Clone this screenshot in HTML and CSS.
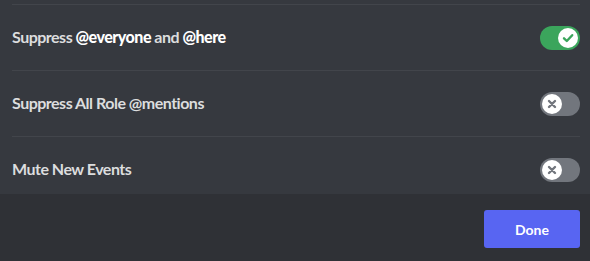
FILE: index.html
```html
<!DOCTYPE html>
<html>
<head>
<meta charset="utf-8">
<link rel="stylesheet" href="styles.css">
</head>
<body>
<div class="modal">
  <div class="scroller">
    <div class="row">
      <div class="label">Suppress <strong>@everyone</strong> and <strong>@here</strong></div>
      <div class="toggle on">
        <div class="knob">
          <svg viewBox="0 0 20 20" width="20" height="20"><path d="M6 10.3 L8.8 13 L14.2 7.2" fill="none" stroke="#3ba55c" stroke-width="2.4" stroke-linecap="round" stroke-linejoin="round"/></svg>
        </div>
      </div>
    </div>
    <div class="row">
      <div class="label">Suppress All Role @mentions</div>
      <div class="toggle">
        <div class="knob">
          <svg viewBox="0 0 20 20" width="20" height="20"><path d="M7 7 L13 13 M13 7 L7 13" fill="none" stroke="#72767d" stroke-width="2.4" stroke-linecap="round"/></svg>
        </div>
      </div>
    </div>
    <div class="row">
      <div class="label">Mute New Events</div>
      <div class="toggle">
        <div class="knob">
          <svg viewBox="0 0 20 20" width="20" height="20"><path d="M7 7 L13 13 M13 7 L7 13" fill="none" stroke="#72767d" stroke-width="2.4" stroke-linecap="round"/></svg>
        </div>
      </div>
    </div>
  </div>
  <div class="footer">
    <button class="done">Done</button>
  </div>
</div>
</body>
</html>
```
FILE: styles.css
```css
html, body {
  margin: 0;
  padding: 0;
  background: #36393f;
}
.modal {
  width: 590px;
  height: 261px;
  display: flex;
  flex-direction: column;
  font-family: "Lato", "Noto Sans", sans-serif;
}
.scroller {
  height: 194px;
  flex: none;
  box-sizing: border-box;
  overflow: hidden;
  padding: 4px 10px 0 12px;
  background: #36393f;
}
.row {
  border-top: 1px solid #42454b;
  height: 65px;
  display: flex;
  align-items: center;
  justify-content: space-between;
}
.label {
  color: #dcddde;
  font-size: 16px;
  font-weight: 700;
  letter-spacing: -0.5px;
  margin-top: -2px;
}
.label strong {
  font-weight: 900;
  color: #ffffff;
}
.toggle {
  width: 40px;
  height: 24px;
  border-radius: 12px;
  background: #72767d;
  display: flex;
  align-items: center;
  padding: 0 2px;
  box-sizing: border-box;
  justify-content: flex-start;
}
.toggle.on {
  background: #3ba55c;
  justify-content: flex-end;
}
.knob {
  width: 20px;
  height: 20px;
  border-radius: 50%;
  background: #ffffff;
  display: flex;
}
.footer {
  flex: 1;
  background: #2f3136;
  display: flex;
  justify-content: flex-end;
  align-items: flex-start;
  padding: 16px 10px 0 0;
}
.done {
  width: 96px;
  height: 38px;
  border: none;
  border-radius: 3px;
  background: #5865f2;
  color: #ffffff;
  font-family: "Lato", "Noto Sans", sans-serif;
  font-size: 14px;
  font-weight: 700;
  cursor: pointer;
}
```
